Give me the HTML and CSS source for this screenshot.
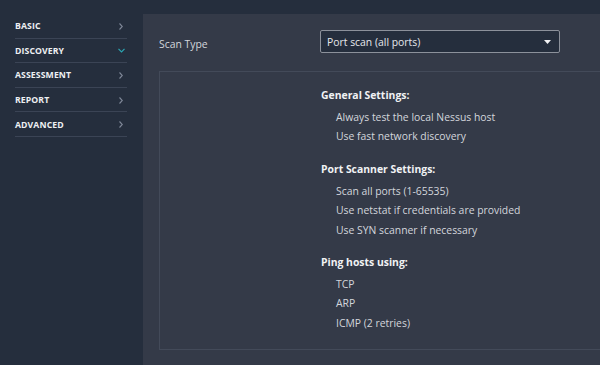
FILE: index.html
```html
<!DOCTYPE html>
<html>
<head>
<meta charset="utf-8">
<link rel="stylesheet" href="styles.css">
</head>
<body>
<div class="app">
  <nav class="sidebar">
    <div class="nav-item"><span>BASIC</span><svg class="chev" width="4" height="7" viewBox="0 0 4 7"><path d="M0.5 0.5 L3.3 3.5 L0.5 6.5" fill="none" stroke="#7f8898" stroke-width="1.1"/></svg></div>
    <div class="nav-item"><span>DISCOVERY</span><svg class="chev down" width="7" height="5" viewBox="0 0 7 5"><path d="M0.5 0.8 L3.5 3.8 L6.5 0.8" fill="none" stroke="#2ba6b3" stroke-width="1.2"/></svg></div>
    <div class="nav-item"><span>ASSESSMENT</span><svg class="chev" width="4" height="7" viewBox="0 0 4 7"><path d="M0.5 0.5 L3.3 3.5 L0.5 6.5" fill="none" stroke="#7f8898" stroke-width="1.1"/></svg></div>
    <div class="nav-item"><span>REPORT</span><svg class="chev" width="4" height="7" viewBox="0 0 4 7"><path d="M0.5 0.5 L3.3 3.5 L0.5 6.5" fill="none" stroke="#7f8898" stroke-width="1.1"/></svg></div>
    <div class="nav-item"><span>ADVANCED</span><svg class="chev" width="4" height="7" viewBox="0 0 4 7"><path d="M0.5 0.5 L3.3 3.5 L0.5 6.5" fill="none" stroke="#7f8898" stroke-width="1.1"/></svg></div>
  </nav>
  <main class="panel">
    <div class="field-row">
      <label class="field-label">Scan Type</label>
      <div class="select">
        <span>Port scan (all ports)</span>
        <svg class="caret" width="7" height="4" viewBox="0 0 7 4"><path d="M0 0 L7 0 L3.5 4 Z" fill="#f2f3f5"/></svg>
      </div>
    </div>
    <div class="summary">
      <div class="group">
        <div class="group-title">General Settings:</div>
        <div class="group-item">Always test the local Nessus host</div>
        <div class="group-item">Use fast network discovery</div>
      </div>
      <div class="group">
        <div class="group-title">Port Scanner Settings:</div>
        <div class="group-item">Scan all ports (1-65535)</div>
        <div class="group-item">Use netstat if credentials are provided</div>
        <div class="group-item">Use SYN scanner if necessary</div>
      </div>
      <div class="group">
        <div class="group-title">Ping hosts using:</div>
        <div class="group-item">TCP</div>
        <div class="group-item">ARP</div>
        <div class="group-item">ICMP (2 retries)</div>
      </div>
    </div>
  </main>
</div>
</body>
</html>
```

FILE: styles.css
```css
html, body {
  margin: 0;
  padding: 0;
  height: 100%;
  background: #252e3d;
  font-family: "Open Sans", "Noto Sans", sans-serif;
}
.app {
  display: flex;
  height: 365px;
  padding-top: 14px;
  box-sizing: border-box;
  overflow: hidden;
}
.sidebar {
  width: 143px;
  flex: none;
  padding: 0 16px 0 15px;
  box-sizing: border-box;
}
.nav-item {
  height: 24.6px;
  box-sizing: border-box;
  border-bottom: 1px solid #3b4455;
  display: flex;
  align-items: center;
  justify-content: space-between;
  padding: 1px 4px 0 0;
  color: #eef0f3;
  font-weight: 700;
  font-size: 8.7px;
  letter-spacing: 0.1px;
}
.chev.down {
  margin-right: -2px;
}
.panel {
  flex: 1;
  background: #343a48;
  padding: 16px 0 0 16px;
  box-sizing: border-box;
  min-width: 0;
}
.field-row {
  display: flex;
  align-items: center;
  height: 23px;
}
.field-label {
  width: 161px;
  flex: none;
  color: #d3d6dc;
  font-size: 10.4px;
  padding-top: 5px;
}
.select {
  width: 240px;
  height: 23px;
  box-sizing: border-box;
  border: 1px solid #8c919b;
  border-radius: 2px;
  background: #252e3d;
  display: flex;
  align-items: center;
  justify-content: space-between;
  padding: 0 8px 0 6px;
  color: #e6e8ec;
  font-size: 10.4px;
}
.caret {
  margin-top: 1px;
}
.summary {
  margin-top: 18px;
  border: 1px solid #434a59;
  border-right: none;
  height: 279px;
  box-sizing: border-box;
  padding: 16px 0 0 161px;
}
.group {
  margin-bottom: 15px;
}
.group-title {
  color: #f1f2f4;
  font-weight: 700;
  font-size: 10.4px;
  line-height: 15px;
  margin-bottom: 5px;
}
.group-item {
  color: #d3d6dc;
  font-size: 10.4px;
  line-height: 19.4px;
  padding-left: 15px;
}
```
